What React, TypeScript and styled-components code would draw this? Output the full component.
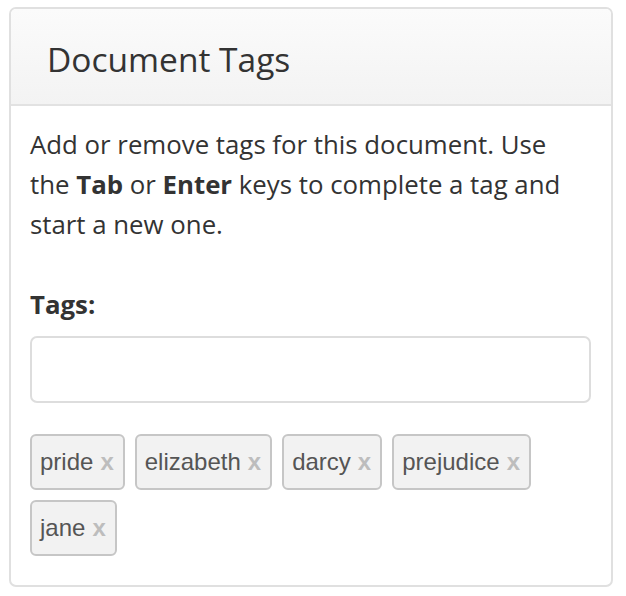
import React from "react";
import styled, { createGlobalStyle } from "styled-components";

const Global = createGlobalStyle`
  html, body { margin: 0; padding: 0; background: #fff; }
  body { font-family: "Open Sans", Lato, sans-serif; color: #333; }
  * { box-sizing: border-box; }
`;

const Page = styled.div`
  padding: 7px 13px 9px 9px;
`;

const Panel = styled.section`
  width: 604px;
  height: 580px;
  border: 2px solid #e0e0e0;
  border-radius: 7px;
  background: #fff;
  overflow: hidden;
  display: flex;
  flex-direction: column;
`;

const Header = styled.header`
  flex: 0 0 97px;
  height: 97px;
  padding: 5px 36px 0;
  display: flex;
  align-items: center;
  background: linear-gradient(#fbfbfb, #f3f3f3);
  border-bottom: 2px solid #e2e2e2;
`;

const Title = styled.h3`
  margin: 0;
  font-family: "Open Sans", Lato, sans-serif;
  font-weight: 400;
  font-size: 33.5px;
  color: #333;
`;

const Body = styled.div`
  padding: 18px 20px 24px 19px;
  display: flex;
  flex-direction: column;
`;

const Intro = styled.p`
  margin: 0;
  font-size: 25.8px;
  line-height: 40px;
  color: #333;
`;

const Strong = styled.strong`
  font-weight: 700;
`;

const Label = styled.label`
  margin-top: 40px;
  font-size: 25.8px;
  line-height: 40px;
  font-weight: 700;
  color: #333;
`;

const Input = styled.input`
  margin-top: 12px;
  height: 67px;
  width: 100%;
  border: 2px solid #dddddd;
  border-radius: 7px;
  outline: none;
  padding: 0 16px;
  font-size: 24px;
`;

const TagList = styled.ul`
  list-style: none;
  margin: 31px 0 0;
  padding: 0;
  display: flex;
  flex-wrap: wrap;
  gap: 10px 10px;
`;

const Tag = styled.li`
  height: 56px;
  display: flex;
  align-items: center;
  padding: 0 9px 0 8px;
  background: #f2f2f2;
  border: 2px solid #c6c6c6;
  border-radius: 6px;
  font-family: "Liberation Sans", Arial, sans-serif;
  font-size: 24px;
  color: #555;
`;

const Remove = styled.span`
  margin-left: 7px;
  font-weight: 700;
  color: #bdbdbd;
`;

const tags = ["pride", "elizabeth", "darcy", "prejudice", "jane"];

export default function App() {
  return (
    <>
      <Global />
      <Page>
        <Panel>
          <Header>
            <Title>Document Tags</Title>
          </Header>
          <Body>
            <Intro>
              Add or remove tags for this document. Use the <Strong>Tab</Strong> or{" "}
              <Strong>Enter</Strong> keys to complete a tag and start a new one.
            </Intro>
            <Label htmlFor="tags">Tags:</Label>
            <Input id="tags" type="text" />
            <TagList>
              {tags.map((t) => (
                <Tag key={t}>
                  {t}
                  <Remove>x</Remove>
                </Tag>
              ))}
            </TagList>
          </Body>
        </Panel>
      </Page>
    </>
  );
}
